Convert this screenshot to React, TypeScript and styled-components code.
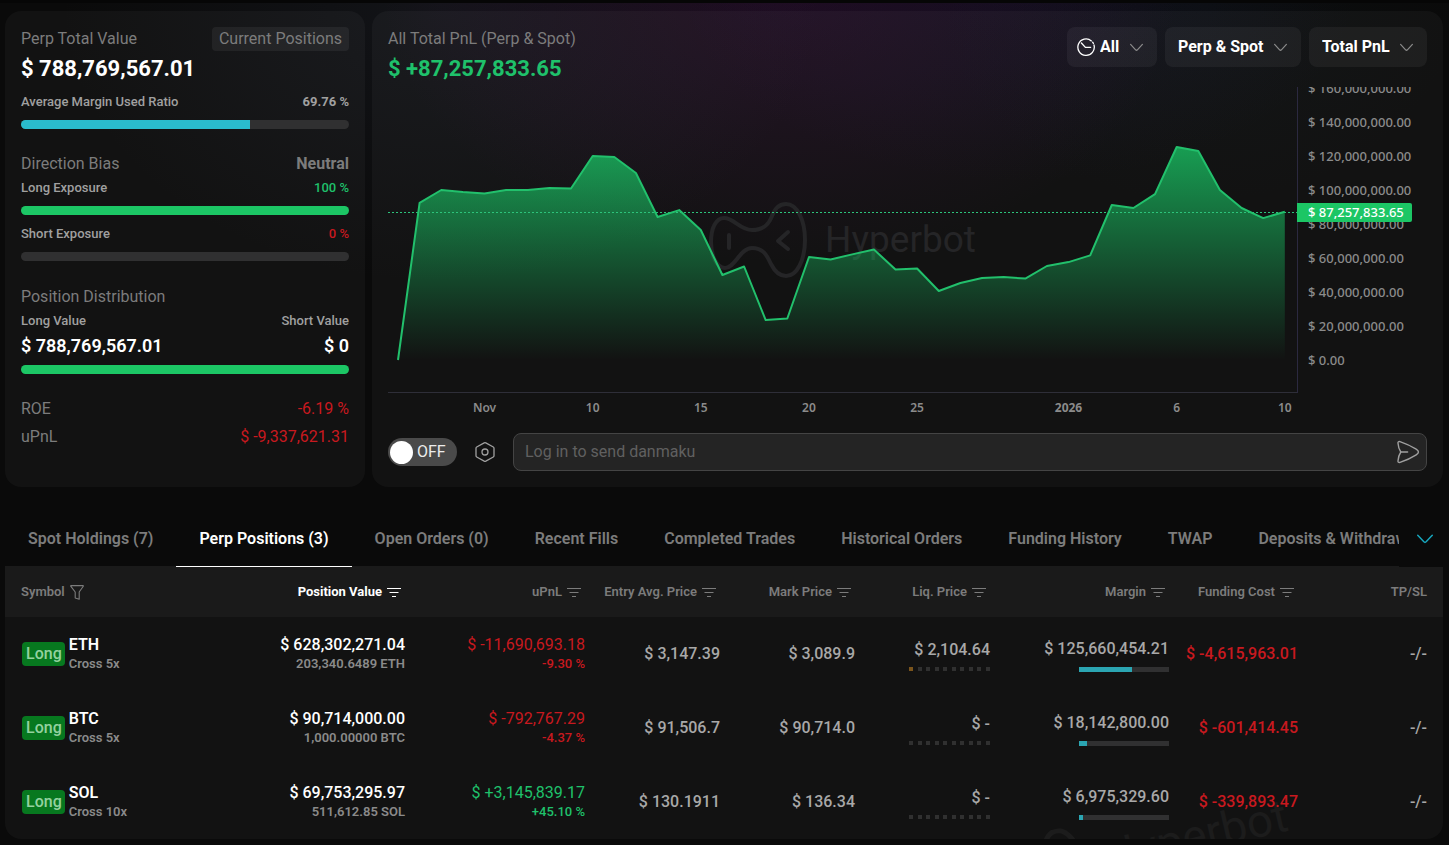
import React, { useState } from 'react';
import styled, { createGlobalStyle, css } from 'styled-components';

const colors = {
  page: '#0a0a0a',
  card: 'rgba(255, 255, 255, 0.035)',
  head: '#1a1a1a',
  track: '#303031',
  muted: '#7c7c7c',
  label: '#a0a0a0',
  soft: '#a8a8a8',
  white: '#ffffff',
  green: '#1fc16b',
  bar: '#1cc665',
  red: '#c8191f',
  cyan: '#2abccd',
};

const tones = { green: colors.green, red: colors.red, white: colors.white, soft: colors.soft };
type Tone = keyof typeof tones;

const GlobalStyle = createGlobalStyle`
  *, *::before, *::after { box-sizing: border-box; }
  body {
    margin: 0;
    background: ${colors.page};
    color: ${colors.white};
    font-family: Roboto, "Liberation Sans", sans-serif;
    font-size: 16px;
    line-height: 24px;
  }
  button, input, select { font: inherit; color: inherit; }
`;

const Page = styled.div`
  border-top: 3px solid #060606;
  padding: 8px 6px 6px 5px;
  background:
    radial-gradient(ellipse 400px 280px at 780px -20px, rgba(110, 20, 120, 0.2), transparent),
    radial-gradient(ellipse 340px 200px at 1020px -20px, rgba(50, 40, 130, 0.12), transparent),
    radial-gradient(ellipse 380px 280px at 440px 0, rgba(70, 80, 110, 0.14), transparent),
    radial-gradient(ellipse 260px 200px at 1200px 0, rgba(20, 50, 60, 0.1), transparent),
    ${colors.page};
`;

const Overview = styled.div`
  display: grid;
  grid-template-columns: 360px minmax(0, 1fr);
  gap: 7px;
`;

const Card = styled.section`
  border-radius: 16px;
  padding: 16px;
  background: ${colors.card};
`;

/* Summary card */

const Line = styled.div<{ $top?: number }>`
  display: flex;
  justify-content: space-between;
  align-items: center;
  margin-top: ${p => p.$top ?? 0}px;
`;

const Title = styled.span<{ $bold?: boolean }>`
  color: ${colors.muted};
  font-weight: ${p => (p.$bold ? 700 : 400)};
`;

const Label = styled.span<{ $tone?: Tone; $bold?: boolean }>`
  font-size: 13px;
  font-weight: ${p => (p.$bold ? 700 : 500)};
  color: ${p => (p.$tone ? tones[p.$tone] : colors.label)};
`;

const Chip = styled.button`
  border: 0;
  border-radius: 4px;
  padding: 0 7px;
  background: rgba(255, 255, 255, 0.06);
  color: ${colors.muted};
`;

const BigValue = styled.div<{ $tone?: Tone }>`
  font-size: 22px;
  line-height: 36px;
  font-weight: 700;
  color: ${p => tones[p.$tone ?? 'white']};
`;

const MidValue = styled.span`
  font-size: 18px;
  line-height: 26px;
  font-weight: 600;
`;

const Figure = styled.span<{ $tone: Tone }>`
  color: ${p => tones[p.$tone]};
`;

const Track = styled.div`
  height: 9px;
  margin-top: 6px;
  border-radius: 5px;
  overflow: hidden;
  background: ${colors.track};
`;

const Fill = styled.div<{ $color: string }>`
  height: 100%;
  background: ${p => p.$color};
`;

function Meter({ value, color, label }: { value: number; color: string; label: string }) {
  return (
    <Track role="progressbar" aria-label={label} aria-valuenow={value}>
      <Fill $color={color} style={{ width: `${value}%` }} />
    </Track>
  );
}

function Summary() {
  return (
    <Card>
      <Line>
        <Title>Perp Total Value</Title>
        <Chip type="button">Current Positions</Chip>
      </Line>
      <BigValue>$ 788,769,567.01</BigValue>
      <Line $top={3}>
        <Label>Average Margin Used Ratio</Label>
        <Label $bold>69.76 %</Label>
      </Line>
      <Meter value={69.76} color={colors.cyan} label="Average Margin Used Ratio" />

      <Line $top={23}>
        <Title>Direction Bias</Title>
        <Title $bold>Neutral</Title>
      </Line>
      <Line>
        <Label>Long Exposure</Label>
        <Label $tone="green">100 %</Label>
      </Line>
      <Meter value={100} color={colors.bar} label="Long Exposure" />
      <Line $top={7}>
        <Label>Short Exposure</Label>
        <Label $tone="red">0 %</Label>
      </Line>
      <Meter value={0} color={colors.red} label="Short Exposure" />

      <Line $top={24}>
        <Title>Position Distribution</Title>
      </Line>
      <Line>
        <Label>Long Value</Label>
        <Label>Short Value</Label>
      </Line>
      <Line>
        <MidValue>$ 788,769,567.01</MidValue>
        <MidValue>$ 0</MidValue>
      </Line>
      <Meter value={100} color={colors.bar} label="Long Value" />

      <Line $top={23}>
        <Title>ROE</Title>
        <Figure $tone="red">-6.19 %</Figure>
      </Line>
      <Line $top={4}>
        <Title>uPnL</Title>
        <Figure $tone="red">$ -9,337,621.31</Figure>
      </Line>
    </Card>
  );
}

/* PnL card */

const PnlHead = styled.div`
  display: flex;
  justify-content: space-between;
  align-items: flex-start;
`;

const Filters = styled.div`
  display: flex;
  gap: 8px;
`;

const FilterBox = styled.label`
  display: flex;
  align-items: center;
  gap: 10px;
  height: 40px;
  padding: 0 14px 0 13px;
  border-radius: 8px;
  background: rgba(255, 255, 255, 0.05);
`;

const FilterSelect = styled.select`
  appearance: none;
  border: 0;
  padding: 0;
  background: transparent;
  color: ${colors.white};
  font-weight: 700;
`;

const Chevron = styled.svg<{ $color?: string }>`
  flex: none;
  fill: none;
  stroke: ${p => p.$color ?? '#8c8c8c'};
  stroke-width: 1.2;
  stroke-linecap: round;
`;

const ClockIcon = styled.svg`
  flex: none;
  margin: 0 -5px 0 -3px;
  fill: none;
  stroke: ${colors.white};
  stroke-width: 1.3;
  stroke-linecap: round;
`;

function Down({ size = 13, color }: { size?: number; color?: string }) {
  return (
    <Chevron $color={color} width={size} height={size} viewBox="0 0 13 13" aria-hidden="true">
      <path d="M.6 3.4 5.6 8.8Q6.5 9.7 7.4 8.8L12.4 3.4" />
    </Chevron>
  );
}

function Filter({ name, value, clock }: { name: string; value: string; clock?: boolean }) {
  return (
    <FilterBox>
      {clock && (
        <ClockIcon width="18" height="18" viewBox="0 0 18 18" aria-hidden="true">
          <path d="M14.4 2.9A8.2 8.2 0 1 0 17 7" />
          <path d="M16.4 5.4 15.6 4.2" />
          <path d="M4.4 5 8.4 9.4H13.6" />
        </ClockIcon>
      )}
      <FilterSelect aria-label={name} defaultValue={value}>
        <option>{value}</option>
      </FilterSelect>
      <Down />
    </FilterBox>
  );
}

const PLOT_W = 909;
const PLOT_H = 305;
const BASE_Y = 273;
const PX_PER_MILLION = 1.7;
const DAY_W = 21.63;

const series = [
  0, 92.4, 100, 98.8, 98, 100, 100, 101.2, 100.9, 120, 119.4, 110, 84.1, 88.2, 76.5, 50, 55, 23.5, 24.4,
  60.6, 59.1, 62.1, 65, 53.2, 53.8, 40.6, 45.3, 48.2, 48.8, 47.9, 55.3, 57.6, 61.5, 91.2, 89.4, 97.6,
  125.3, 122.9, 100, 89.4, 83.5, 87.2,
];
const points = series.map((v, i) => `${(10 + i * DAY_W).toFixed(1)},${(BASE_Y - v * PX_PER_MILLION).toFixed(1)}`);
const linePath = `M${points.join('L')}`;
const areaPath = `${linePath}V${BASE_Y}H10Z`;

const days = [
  { text: 'Nov', index: 4 },
  { text: '10', index: 9 },
  { text: '15', index: 14 },
  { text: '20', index: 19 },
  { text: '25', index: 24 },
  { text: '2026', index: 31, major: true },
  { text: '6', index: 36 },
  { text: '10', index: 41 },
];

const prices = ['160,000,000.00', '140,000,000.00', '120,000,000.00', '100,000,000.00', '80,000,000.00',
  '60,000,000.00', '40,000,000.00', '20,000,000.00', '0.00'];

const axisFont = css`
  font-family: "Trebuchet MS", "Noto Sans", sans-serif;
  font-size: 13px;
  font-weight: 500;
  color: #8b8b8b;
`;

const Chart = styled.div`
  display: grid;
  grid-template-columns: minmax(0, 1fr) 130px;
  grid-template-rows: 306px 28px;
`;

const Plot = styled.div`
  position: relative;
  border-bottom: 1px solid #2e2e38;
`;

const PlotSvg = styled.svg`
  position: relative;
  display: block;
  width: 100%;
  height: 305px;
`;

const Watermark = styled.div`
  position: absolute;
  inset: 0;
  display: flex;
  align-items: center;
  justify-content: center;
  gap: 18px;
  font-size: 37px;
  line-height: 44px;
  color: #252527;
`;

const PriceAxis = styled.div`
  position: relative;
  border-left: 1px solid #2b2940;
`;

const PriceList = styled.div`
  height: 100%;
  overflow: hidden;
`;

const Price = styled.div`
  ${axisFont}
  line-height: 34px;
  padding-left: 10px;
  &:first-child { margin-top: -16px; }
`;

const PriceTag = styled.div`
  ${axisFont}
  position: absolute;
  top: 116px;
  left: -1px;
  padding: 0 8px 0 11px;
  border-radius: 0 2px 2px 0;
  line-height: 19px;
  background: ${colors.bar};
  color: ${colors.white};
`;

const DayAxis = styled.div`
  position: relative;
`;

const Day = styled.span<{ $major?: boolean }>`
  ${axisFont}
  position: absolute;
  top: 5px;
  transform: translateX(-50%);
  font-size: 12px;
  line-height: 20px;
  font-weight: ${p => (p.$major ? 700 : 600)};
`;

function BotMark({ width, height, strokeWidth = 4 }: { width: number; height: number; strokeWidth?: number }) {
  return (
    <svg width={width} height={height} viewBox="0 0 98 76" fill="none" stroke="currentColor"
      strokeWidth={strokeWidth} strokeLinecap="round" strokeLinejoin="round" aria-hidden="true">
      <path d="M15 16C25 16 31 28 43 28S60 22 63 14C66 6 71 2 77 2C88 2 96 18 96 38S88 74 77 74C71 74 66 70 62 62C58 54 55 46 43 46S26 66 16 66C8 66 2 54 2 40S7 16 15 16Z" />
      <path d="M20 33V46" />
      <path d="M79 30 69 39 79 47" />
    </svg>
  );
}

function PnlChart() {
  return (
    <Chart>
      <Plot>
        <Watermark>
          <BotMark width={98} height={76} />
          <span>Hyperbot</span>
        </Watermark>
        <PlotSvg viewBox={`0 0 ${PLOT_W} ${PLOT_H}`} preserveAspectRatio="none" role="img" aria-label="Total PnL over time">
          <defs>
            <linearGradient id="pnl" gradientUnits="userSpaceOnUse" x1="0" y1="58" x2="0" y2={BASE_Y}>
              <stop offset="0" stopColor="#19c665" stopOpacity="0.78" />
              <stop offset="1" stopColor="#19c665" stopOpacity="0" />
            </linearGradient>
          </defs>
          <path d={areaPath} fill="url(#pnl)" />
          <path d={`M0 125.5H${PLOT_W}`} stroke="#2cc47b" strokeDasharray="2 2" vectorEffect="non-scaling-stroke" />
          <path d={linePath} fill="none" stroke="#22c06c" strokeWidth="2" strokeLinejoin="round" vectorEffect="non-scaling-stroke" />
        </PlotSvg>
      </Plot>
      <PriceAxis>
        <PriceList>
          {prices.map(p => <Price key={p}>$ {p}</Price>)}
        </PriceList>
        <PriceTag>$ 87,257,833.65</PriceTag>
      </PriceAxis>
      <DayAxis>
        {days.map(d => (
          <Day key={d.index} $major={d.major} style={{ left: `${((10 + d.index * DAY_W) / PLOT_W) * 100}%` }}>
            {d.text}
          </Day>
        ))}
      </DayAxis>
    </Chart>
  );
}

const ChatRow = styled.div`
  display: flex;
  align-items: center;
  margin-top: 12px;
`;

const Switch = styled.label`
  display: flex;
  align-items: center;
  gap: 4px;
  width: 69px;
  height: 28px;
  padding: 0 2px;
  border-radius: 14px;
  background: #4a4a4a;
  color: #ececec;
`;

const SwitchInput = styled.input`
  appearance: none;
  flex: none;
  width: 23px;
  height: 23px;
  margin: 0;
  border-radius: 50%;
  background: ${colors.white};
`;

const IconButton = styled.button`
  display: flex;
  flex: none;
  border: 0;
  padding: 0;
  background: transparent;
  color: #a0a0a0;
`;

const HexButton = styled(IconButton)`
  margin: 0 18px;
`;

const ChatBox = styled.div`
  display: flex;
  align-items: center;
  flex: 1;
  height: 38px;
  padding: 0 6px 0 11px;
  border: 1px solid #444;
  border-radius: 8px;
  background: #242424;
`;

const ChatInput = styled.input`
  flex: 1;
  min-width: 0;
  border: 0;
  padding: 0;
  outline: 0;
  background: transparent;
  &::placeholder { color: #606060; opacity: 1; }
`;

function Chat() {
  const [on, setOn] = useState(false);
  return (
    <ChatRow>
      <Switch>
        <SwitchInput type="checkbox" checked={on} onChange={e => setOn(e.target.checked)} />
        {on ? 'ON' : 'OFF'}
      </Switch>
      <HexButton type="button" aria-label="Danmaku settings">
        <svg width="20" height="20" viewBox="0 0 20 20" fill="none" stroke="currentColor" strokeWidth="1.3" strokeLinejoin="round">
          <path d="M9.2.9Q10 .5 10.8.9L18.3 5Q19 5.4 19 6.2V13.8Q19 14.6 18.3 15L10.8 19.1Q10 19.5 9.2 19.1L1.7 15Q1 14.6 1 13.8V6.2Q1 5.4 1.7 5Z" />
          <circle cx="10" cy="10" r="3" />
        </svg>
      </HexButton>
      <ChatBox>
        <ChatInput type="text" aria-label="Danmaku message" placeholder="Log in to send danmaku" />
        <IconButton type="submit" aria-label="Send">
          <svg width="24" height="24" viewBox="0 0 24 24" fill="none" stroke="currentColor" strokeWidth="1.4" strokeLinejoin="round" strokeLinecap="round">
            <path d="M2 3.2C1.7 1.9 2.8 1.2 4 1.6C9.6 3.5 15 5.9 20.2 9.2C23.2 11 23.2 13 20.2 14.8C15 18.1 9.6 20.5 4 22.4C2.8 22.8 1.7 22.1 2 20.8C2.2 17.4 3 14.8 4.8 12C3 9.2 2.2 6.6 2 3.2Z" />
            <path d="M4.8 12H11.6" />
          </svg>
        </IconButton>
      </ChatBox>
    </ChatRow>
  );
}

function Pnl() {
  return (
    <Card>
      <PnlHead>
        <div>
          <Title>All Total PnL (Perp &amp; Spot)</Title>
          <BigValue $tone="green">$ +87,257,833.65</BigValue>
        </div>
        <Filters>
          <Filter name="Period" value="All" clock />
          <Filter name="Market" value="Perp &amp; Spot" />
          <Filter name="Metric" value="Total PnL" />
        </Filters>
      </PnlHead>
      <PnlChart />
      <Chat />
    </Card>
  );
}

/* Tabs */

const TabRow = styled.div`
  display: flex;
  margin-top: 24px;
`;

const TabList = styled.div`
  display: flex;
  flex: 1;
  min-width: 0;
  overflow: hidden;
  background: linear-gradient(${colors.head}, ${colors.head}) bottom / 100% 1px no-repeat;
`;

const Tab = styled.button<{ $active: boolean }>`
  flex: none;
  height: 56px;
  padding: 0 23px;
  border: 0;
  border-bottom: 1px solid ${p => (p.$active ? colors.white : 'transparent')};
  background: transparent;
  color: ${p => (p.$active ? colors.white : colors.muted)};
  font-weight: 600;
  white-space: nowrap;
`;

const MoreButton = styled(IconButton)`
  align-items: center;
  justify-content: center;
  width: 44px;
  padding-left: 7px;
`;

const tabs = ['Spot Holdings (7)', 'Perp Positions (3)', 'Open Orders (0)', 'Recent Fills', 'Completed Trades',
  'Historical Orders', 'Funding History', 'TWAP', 'Deposits & Withdrawals'];

function Tabs() {
  const [active, setActive] = useState(1);
  return (
    <TabRow>
      <TabList role="tablist">
        {tabs.map((t, i) => (
          <Tab key={t} type="button" role="tab" aria-selected={i === active} $active={i === active} onClick={() => setActive(i)}>
            {t}
          </Tab>
        ))}
      </TabList>
      <MoreButton type="button" aria-label="More tabs">
        <Down size={16} color="#17a6bd" />
      </MoreButton>
    </TabRow>
  );
}

/* Positions table */

const TableCard = styled.div`
  position: relative;
  overflow: hidden;
  border-radius: 0 0 16px 16px;
  background: ${colors.card};
`;

const Mark = styled.div`
  position: absolute;
  right: 152px;
  bottom: -48px;
  display: flex;
  align-items: center;
  gap: 20px;
  transform: rotate(-13deg);
  font-size: 46px;
  line-height: 50px;
  color: #1c1c1c;
`;

const Table = styled.table`
  position: relative;
  width: 100%;
  table-layout: fixed;
  border-collapse: collapse;
`;

const Th = styled.th<{ $left?: boolean; $active?: boolean }>`
  height: 50px;
  padding: 0 10px 0 0;
  background: ${colors.head};
  color: ${p => (p.$active ? colors.white : colors.muted)};
  font-size: 13px;
  font-weight: ${p => (p.$active ? 700 : 600)};
  white-space: nowrap;
  text-align: ${p => (p.$left ? 'left' : 'right')};
  &:first-child { padding-left: 16px; }
  &:last-child { padding-right: 16px; }
`;

const SortButton = styled.button<{ $left?: boolean }>`
  display: inline-flex;
  align-items: center;
  gap: 5px;
  border: 0;
  padding: 0 ${p => (p.$left ? 0 : 4)}px 0 0;
  background: transparent;
`;

const Td = styled.td`
  height: 74px;
  padding: 0 10px 0 0;
  text-align: right;
  vertical-align: middle;
  white-space: nowrap;
  color: ${colors.soft};
  font-weight: 500;
  &:first-child { padding-left: 17px; }
  &:last-child { padding-right: 16px; }
`;

const Coin = styled.div`
  display: flex;
  align-items: center;
  gap: 4px;
  text-align: left;
`;

const Side = styled.span`
  padding: 0 3px 0 4px;
  border-radius: 4px;
  background: #07781f;
  color: #93d29f;
`;

const Main = styled.div<{ $tone?: Tone; $weight?: number }>`
  line-height: 20px;
  font-weight: ${p => p.$weight ?? 500};
  color: ${p => tones[p.$tone ?? 'white']};
`;

const Sub = styled.div<{ $tone?: Tone }>`
  font-size: 13px;
  line-height: 18px;
  font-weight: ${p => (p.$tone ? 500 : 600)};
  color: ${p => (p.$tone ? tones[p.$tone] : '#8a8a8a')};
`;

const Dots = styled.div`
  display: flex;
  justify-content: space-between;
  width: 81px;
  margin: 5px 0 0 auto;
`;

const Dot = styled.i<{ $on: boolean }>`
  width: 4px;
  height: 4px;
  background: ${p => (p.$on ? '#7a541c' : '#303030')};
`;

const MarginTrack = styled.div`
  width: 90px;
  height: 5px;
  margin: 6px 0 0 auto;
  background: ${colors.track};
`;

function SortIcon() {
  return (
    <svg width="14" height="12" viewBox="0 0 14 12" stroke="currentColor" strokeWidth="1" aria-hidden="true">
      <path d="M0 2.5H14M2.5 6.5H11.5M5 10.5H9" />
    </svg>
  );
}

function FunnelIcon() {
  return (
    <svg width="14" height="16" viewBox="0 0 14 16" fill="none" stroke="currentColor" strokeWidth="1.1" strokeLinejoin="round" aria-hidden="true">
      <path d="M.7 2.2Q.4 1.6 1 1.6H13Q13.6 1.6 13.3 2.2L9.2 8V15.2L5.2 14V8Z" />
    </svg>
  );
}

const columns = [
  { name: 'Position Value', width: 180 },
  { name: 'uPnL', width: 180 },
  { name: 'Entry Avg. Price', width: 135 },
  { name: 'Mark Price', width: 135 },
  { name: 'Liq. Price', width: 135 },
  { name: 'Margin', width: 179 },
  { name: 'Funding Cost', width: 129 },
];

const rows: {
  coin: string; mode: string; value: string; size: string; pnl: string; pct: string; tone: Tone;
  entry: string; mark: string; liq: string; risk: number; margin: string; share: number; funding: string;
}[] = [
  { coin: 'ETH', mode: 'Cross 5x', value: '$ 628,302,271.04', size: '203,340.6489 ETH', pnl: '$ -11,690,693.18', pct: '-9.30 %', tone: 'red',
    entry: '$ 3,147.39', mark: '$ 3,089.9', liq: '$ 2,104.64', risk: 1, margin: '$ 125,660,454.21', share: 59, funding: '$ -4,615,963.01' },
  { coin: 'BTC', mode: 'Cross 5x', value: '$ 90,714,000.00', size: '1,000.00000 BTC', pnl: '$ -792,767.29', pct: '-4.37 %', tone: 'red',
    entry: '$ 91,506.7', mark: '$ 90,714.0', liq: '$ -', risk: 0, margin: '$ 18,142,800.00', share: 9, funding: '$ -601,414.45' },
  { coin: 'SOL', mode: 'Cross 10x', value: '$ 69,753,295.97', size: '511,612.85 SOL', pnl: '$ +3,145,839.17', pct: '+45.10 %', tone: 'green',
    entry: '$ 130.1911', mark: '$ 136.34', liq: '$ -', risk: 0, margin: '$ 6,975,329.60', share: 4, funding: '$ -339,893.47' },
];

function Positions() {
  return (
    <TableCard>
      <Mark aria-hidden="true">
        <BotMark width={98} height={76} strokeWidth={5} />
        <span>Hyperbot</span>
      </Mark>
      <Table>
        <colgroup>
          <col width={230} />
          {columns.map(c => <col key={c.name} width={c.width} />)}
          <col width={135} />
        </colgroup>
        <thead>
          <tr>
            <Th $left><SortButton type="button" $left>Symbol <FunnelIcon /></SortButton></Th>
            {columns.map((c, i) => (
              <Th key={c.name} $active={i === 0}>
                <SortButton type="button">{c.name} <SortIcon /></SortButton>
              </Th>
            ))}
            <Th>TP/SL</Th>
          </tr>
        </thead>
        <tbody>
          {rows.map(r => (
            <tr key={r.coin}>
              <Td>
                <Coin>
                  <Side>Long</Side>
                  <div>
                    <Main $weight={600}>{r.coin}</Main>
                    <Sub>{r.mode}</Sub>
                  </div>
                </Coin>
              </Td>
              <Td><Main>{r.value}</Main><Sub>{r.size}</Sub></Td>
              <Td><Main $tone={r.tone} $weight={400}>{r.pnl}</Main><Sub $tone={r.tone}>{r.pct}</Sub></Td>
              <Td>{r.entry}</Td>
              <Td>{r.mark}</Td>
              <Td>
                {r.liq}
                <Dots>{Array.from({ length: 10 }, (_, i) => <Dot key={i} $on={i < r.risk} />)}</Dots>
              </Td>
              <Td>
                {r.margin}
                <MarginTrack><Fill $color="#2ba5b2" style={{ width: `${r.share}%` }} /></MarginTrack>
              </Td>
              <Td><Figure $tone="red">{r.funding}</Figure></Td>
              <Td>-/-</Td>
            </tr>
          ))}
        </tbody>
      </Table>
    </TableCard>
  );
}

export default function App() {
  return (
    <>
      <GlobalStyle />
      <Page>
        <Overview>
          <Summary />
          <Pnl />
        </Overview>
        <Tabs />
        <Positions />
      </Page>
    </>
  );
}
